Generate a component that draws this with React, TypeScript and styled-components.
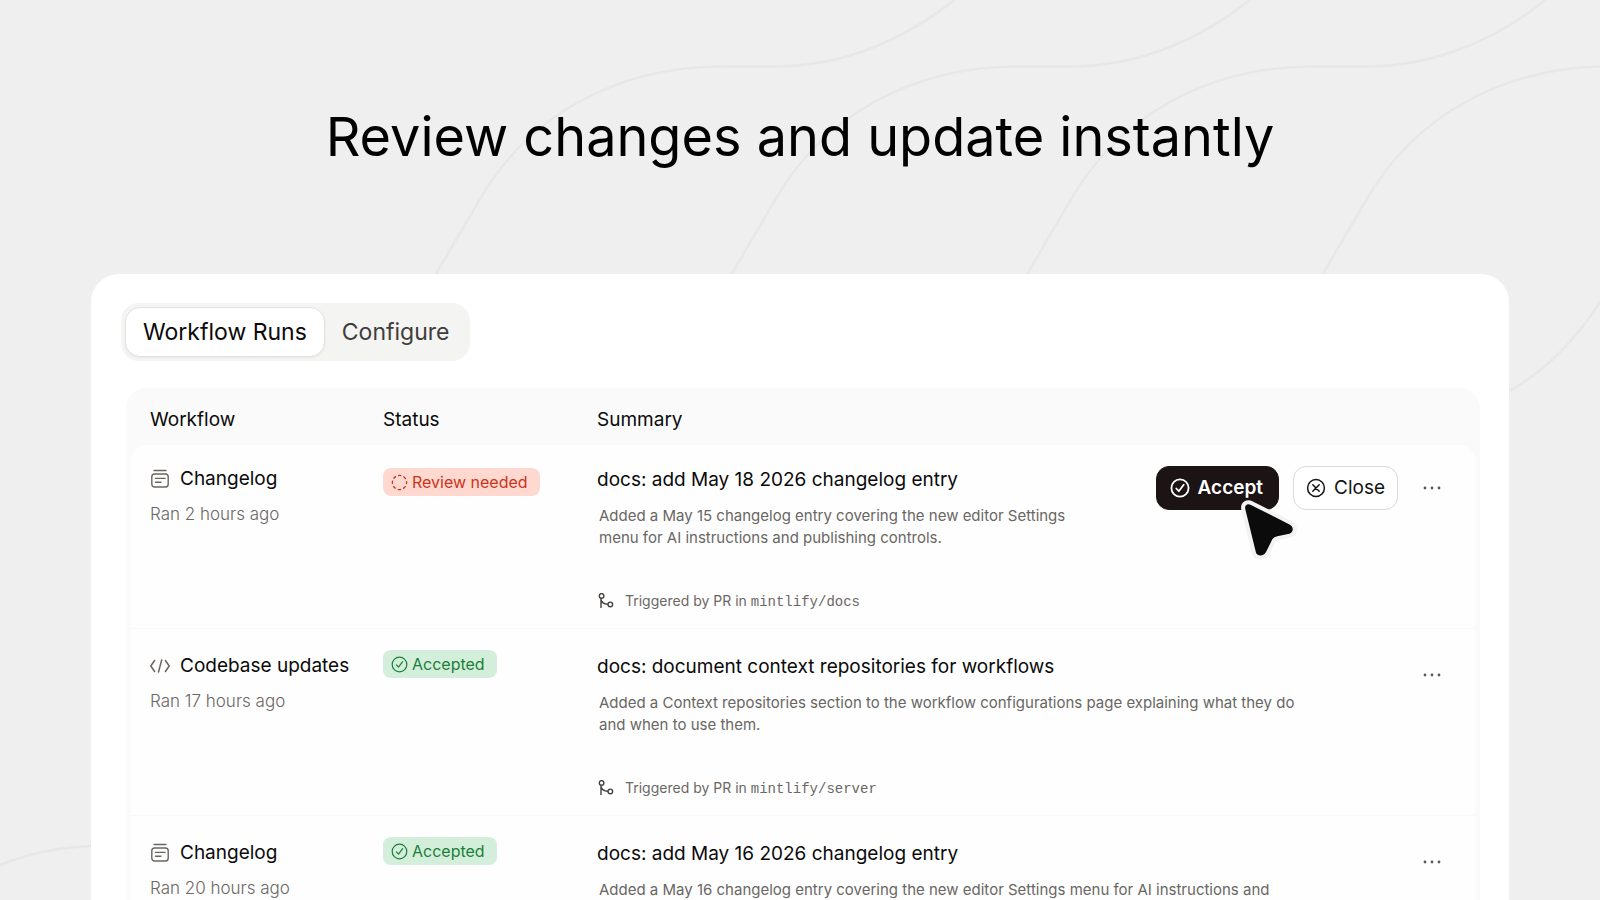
import React, { useState } from "react";
import styled, { createGlobalStyle, css } from "styled-components";

const sans = `Inter, "Liberation Sans", sans-serif`;
const mono = `"Liberation Mono", monospace`;

const GlobalStyle = createGlobalStyle`
  *, *::before, *::after { box-sizing: border-box; }
  body { margin: 0; background: #efefef; font-family: ${sans}; }
  button { font-family: inherit; cursor: pointer; }
`;

const Page = styled.main`
  position: relative;
  height: 100vh;
  overflow: hidden;
  display: flex;
  flex-direction: column;
  background: #efefef;
`;

const Waves = styled.svg`
  position: absolute;
  inset: 0;
  width: 100%;
  height: 100%;
  fill: none;
  stroke: #e7e7e7;
  stroke-width: 2.5;
`;

const Hero = styled.header`
  position: relative;
  padding: 105px 24px;
  text-align: center;
`;

const Title = styled.h1`
  margin: 0;
  color: #000;
  font-size: 54px;
  line-height: 64px;
  font-weight: 400;
`;

const Panel = styled.section`
  position: relative;
  flex: 1 0 auto;
  margin: 0 91px;
  padding: 29px 29px 0 30px;
  border-radius: 28px 28px 0 0;
  background: #fff;
`;

const Tabs = styled.div`
  display: inline-flex;
  padding: 4px;
  border-radius: 18px;
  background: #f4f4f3;
`;

const Tab = styled.button<{ $active: boolean }>`
  height: 50px;
  padding: 0 ${(p) => (p.$active ? 17 : 16)}px;
  border: 1px solid transparent;
  border-radius: 15px;
  background: transparent;
  color: #403d3b;
  font-size: 23px;
  line-height: 28px;
  ${(p) =>
    p.$active &&
    css`
      border-color: #e3e2e0;
      background: #fff;
      color: #0a0a0a;
      box-shadow: 0 1px 2px rgba(0, 0, 0, 0.06);
    `}
`;

const TableFrame = styled.div`
  margin: 27px 0 0 5px;
  padding: 0 5px;
  border-radius: 20px 20px 0 0;
  background: #fafafa;
`;

const Table = styled.table`
  width: 100%;
  table-layout: fixed;
  border-collapse: separate;
  border-spacing: 0;
  text-align: left;
`;

const HeadCell = styled.th<{ $width?: number; $inset?: boolean }>`
  width: ${(p) => (p.$width ? `${p.$width}px` : "auto")};
  padding: 20px 0 13px ${(p) => (p.$inset ? 19 : 0)}px;
  color: #0a0a0a;
  font-size: 19px;
  line-height: 24px;
  font-weight: 400;
`;

const Cell = styled.td<{ $top: number; $inset?: boolean }>`
  padding: ${(p) => p.$top}px 0 15px ${(p) => (p.$inset ? 19 : 0)}px;
  border-bottom: 1px solid #f9f9f8;
  background: #fefefe;
  font-weight: 400;
  vertical-align: top;
`;

const Row = styled.tr`
  &:first-child > :first-child { border-top-left-radius: 16px; }
  &:first-child > :last-child { border-top-right-radius: 16px; }
`;

const Workflow = styled.div`
  display: flex;
  align-items: center;
  gap: 10px;
  color: #0a0a0a;
  font-size: 19px;
  line-height: 24px;
`;

const RanAt = styled.p`
  margin: 11px 0 0;
  color: #6b6764;
  font-size: 17px;
  line-height: 24px;
  font-weight: 300;
`;

const Badge = styled.span<{ $tone: "review" | "accepted" }>`
  display: inline-flex;
  align-items: center;
  gap: 4px;
  height: 28px;
  padding: 0 12px 0 8px;
  border-radius: 8px;
  font-size: 16px;
  line-height: 20px;
  white-space: nowrap;
  vertical-align: top;
  ${(p) =>
    p.$tone === "review"
      ? css`
          background: #ffd9d0;
          color: #cb3320;
        `
      : css`
          background: #d3eedb;
          color: #1c7f38;
        `}
`;

const SummaryLayout = styled.div`
  display: flex;
  justify-content: space-between;
  align-items: flex-start;
  gap: 56px;
`;

const SummaryText = styled.div`
  flex: 1;
  max-width: 722px;
`;

const SummaryTitle = styled.h2`
  margin: 0;
  color: #0a0a0a;
  font-size: 19px;
  line-height: 24px;
  font-weight: 400;
`;

const Description = styled.p`
  margin: 13px 0 0;
  padding-left: 2px;
  color: #696663;
  font-size: 15px;
  line-height: 22px;
`;

const Trigger = styled.div`
  display: flex;
  align-items: center;
  gap: 10px;
  margin-top: 41px;
  color: #6b6764;
  font-size: 14px;
  line-height: 22px;
`;

const Repo = styled.code`
  font-family: ${mono};
  font-size: 14px;
`;

const Actions = styled.div`
  display: flex;
  gap: 14px;
  margin-top: -2px;
`;

const ActionButton = styled.button<{ $primary?: boolean }>`
  display: flex;
  align-items: center;
  gap: 8px;
  height: 44px;
  padding: 0 ${(p) => (p.$primary ? 15 : 12)}px 0 ${(p) => (p.$primary ? 13 : 12)}px;
  border: 1px solid ${(p) => (p.$primary ? "#1c1314" : "#dcdbd9")};
  border-radius: 13px;
  background: ${(p) => (p.$primary ? "#1c1314" : "#fff")};
  color: ${(p) => (p.$primary ? "#fff" : "#141414")};
  font-size: 19px;
  line-height: 24px;
  font-weight: ${(p) => (p.$primary ? 600 : 400)};
`;

const Pointed = styled.div`
  position: relative;
`;

const Pointer = styled.svg`
  position: absolute;
  left: 82px;
  top: 30px;
  z-index: 1;
  overflow: visible;
  pointer-events: none;
`;

const MenuButton = styled.button`
  display: grid;
  place-items: center;
  width: 44px;
  height: 44px;
  margin-left: 12px;
  padding: 0;
  border: 0;
  border-radius: 12px;
  background: transparent;
  color: #5c5855;
`;

const LineIcon = styled.svg`
  flex: none;
  fill: none;
  stroke: currentColor;
  stroke-linecap: round;
  stroke-linejoin: round;
`;

const MutedIcon = styled(LineIcon)`
  color: #6b6560;
`;

const ChangelogIcon = () => (
  <MutedIcon width="20" height="20" viewBox="0 0 20 20" strokeWidth="1.4" aria-hidden>
    <path d="M4 1.5h12" />
    <rect x="1.8" y="5" width="16.4" height="13" rx="2.8" />
    <path d="M5.5 9.4h9.5M5.5 13.2h5.5" />
  </MutedIcon>
);

const CodeIcon = () => (
  <MutedIcon width="20" height="20" viewBox="0 0 20 20" strokeWidth="1.5" aria-hidden>
    <path d="M4.6 4.5.8 10l3.800 5.500M15.400 4.500l3.800 5.500-3.800 5.500M11.700 4 8.500 16" />
  </MutedIcon>
);

const DashedCircle = () => (
  <LineIcon width="17" height="17" viewBox="0 0 17 17" strokeWidth="1.3" aria-hidden>
    <circle
      cx="8.5"
      cy="8.5"
      r="7.1"
      strokeLinecap="butt"
      strokeDasharray="3.4 2.18"
      strokeDashoffset="1.7"
    />
  </LineIcon>
);

const CheckCircle = ({ size, weight }: { size: number; weight: number }) => (
  <LineIcon width={size} height={size} viewBox="0 0 20 20" strokeWidth={weight} aria-hidden>
    <circle cx="10" cy="10" r="8.6" />
    <path d="m6.3 10.5 2.5 2.7 4.9-6.5" />
  </LineIcon>
);

const CrossCircle = () => (
  <LineIcon width="20" height="20" viewBox="0 0 20 20" strokeWidth="1.5" aria-hidden>
    <circle cx="10" cy="10" r="8.4" />
    <path d="m6.8 6.8 6.4 6.4m0-6.4-6.4 6.4" />
  </LineIcon>
);

const BranchIcon = () => (
  <LineIcon width="18" height="18" viewBox="0 0 18 18" strokeWidth="1.4" color="#45413e" aria-hidden>
    <circle cx="4.6" cy="2.9" r="2.3" />
    <circle cx="13.3" cy="11.4" r="2.3" />
    <path d="M4 5.400v9M4 6.400c.5 2.900 2.600 4.700 6.800 4.900" />
  </LineIcon>
);

const Dots = () => (
  <svg width="18" height="6" viewBox="0 0 18 6" fill="currentColor" aria-hidden>
    <circle cx="2" cy="3" r="1.4" />
    <circle cx="9" cy="3" r="1.4" />
    <circle cx="16" cy="3" r="1.4" />
  </svg>
);

type Run = {
  workflow: string;
  kind: "changelog" | "code";
  ran: string;
  status: "review" | "accepted";
  title: string;
  description: string;
  repo?: string;
};

const runs: Run[] = [
  {
    workflow: "Changelog",
    kind: "changelog",
    ran: "Ran 2 hours ago",
    status: "review",
    title: "docs: add May 18 2026 changelog entry",
    description:
      "Added a May 15 changelog entry covering the new editor Settings menu for AI instructions and publishing controls.",
    repo: "mintlify/docs",
  },
  {
    workflow: "Codebase updates",
    kind: "code",
    ran: "Ran 17 hours ago",
    status: "accepted",
    title: "docs: document context repositories for workflows",
    description:
      "Added a Context repositories section to the workflow configurations page explaining what they do and when to use them.",
    repo: "mintlify/server",
  },
  {
    workflow: "Changelog",
    kind: "changelog",
    ran: "Ran 20 hours ago",
    status: "accepted",
    title: "docs: add May 16 2026 changelog entry",
    description:
      "Added a May 16 changelog entry covering the new editor Settings menu for AI instructions and",
  },
];

const wave = "M436 274 480 199C530 113 620 66.500 722 66.500H775C845 66.500 907 38 954 0";

const Background = () => (
  <Waves viewBox="0 0 1600 900" preserveAspectRatio="xMidYMid slice" aria-hidden>
    {[0, 1, 2, 3].map((n) => (
      <path key={n} d={wave} transform={`translate(${n * 295.6} 0)`} />
    ))}
    <path d="M1500 396C1540 376 1575 342 1602 299" />
    <path d="M-2 866C28 853 58 847 95 846" />
  </Waves>
);

const RunRow = ({ run, first }: { run: Run; first: boolean }) => (
  <Row>
    <Cell as="th" scope="row" $top={first ? 22 : 25} $inset>
      <Workflow>
        {run.kind === "code" ? <CodeIcon /> : <ChangelogIcon />}
        {run.workflow}
      </Workflow>
      <RanAt>{run.ran}</RanAt>
    </Cell>
    <Cell $top={first ? 23 : 21}>
      <Badge $tone={run.status}>
        {run.status === "review" ? <DashedCircle /> : <CheckCircle size={17} weight={1.4} />}
        {run.status === "review" ? "Review needed" : "Accepted"}
      </Badge>
    </Cell>
    <Cell $top={first ? 23 : 26}>
      <SummaryLayout>
        <SummaryText>
          <SummaryTitle>{run.title}</SummaryTitle>
          <Description>{run.description}</Description>
          {run.repo && (
            <Trigger>
              <BranchIcon />
              <span>
                Triggered by PR in <Repo>{run.repo}</Repo>
              </span>
            </Trigger>
          )}
        </SummaryText>
        {run.status === "review" && (
          <Actions>
            <Pointed>
              <ActionButton type="button" $primary>
                <CheckCircle size={20} weight={1.8} />
                Accept
              </ActionButton>
              <Pointer width="64" height="68" viewBox="0 0 64 68" aria-hidden>
                <path
                  d="M7.300 13.300C6.300 9 9.500 7 13 9L52 28.700C56 31 55.500 36.500 51.300 37.700L39.300 40.300Q36 41 34.300 43.300L28 56C26 60.500 19.500 60.500 18 56.700Z"
                  fill="#0b0b0b"
                  stroke="#f3f3f3"
                  strokeWidth="8"
                  strokeLinejoin="round"
                  paintOrder="stroke"
                />
              </Pointer>
            </Pointed>
            <ActionButton type="button">
              <CrossCircle />
              Close
            </ActionButton>
          </Actions>
        )}
      </SummaryLayout>
    </Cell>
    <Cell $top={first ? 21 : 24}>
      <MenuButton type="button" aria-label={`More options for ${run.title}`}>
        <Dots />
      </MenuButton>
    </Cell>
  </Row>
);

const tabs = ["Workflow Runs", "Configure"];

export default function App() {
  const [active, setActive] = useState(tabs[0]);
  return (
    <Page>
      <GlobalStyle />
      <Background />
      <Hero>
        <Title>Review changes and update instantly</Title>
      </Hero>
      <Panel>
        <Tabs role="tablist">
          {tabs.map((t) => (
            <Tab
              key={t}
              type="button"
              role="tab"
              aria-selected={t === active}
              $active={t === active}
              onClick={() => setActive(t)}
            >
              {t}
            </Tab>
          ))}
        </Tabs>
        <TableFrame>
          <Table>
            <thead>
              <tr>
                <HeadCell scope="col" $width={252} $inset>Workflow</HeadCell>
                <HeadCell scope="col" $width={214}>Status</HeadCell>
                <HeadCell scope="col">Summary</HeadCell>
                <HeadCell scope="col" $width={77} aria-label="Options" />
              </tr>
            </thead>
            <tbody>
              {runs.map((run, i) => (
                <RunRow key={run.title} run={run} first={i === 0} />
              ))}
            </tbody>
          </Table>
        </TableFrame>
      </Panel>
    </Page>
  );
}
